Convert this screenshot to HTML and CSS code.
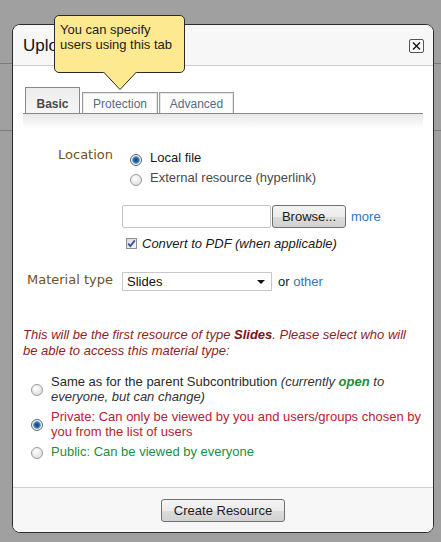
FILE: index.html
```html
<!DOCTYPE html>
<html>
<head>
<meta charset="utf-8">
<link rel="stylesheet" href="styles.css">
</head>
<body>
<div class="bgline bgline-a"></div>
<div class="bgline bgline-b"></div>
<div class="dialog">
  <div class="hdr">
    <span class="title">Upload Material</span>
    <button class="close" aria-label="Close"><svg width="13" height="12" viewBox="0 0 13 12"><path d="M3 2.5 L10 9.5 M10 2.5 L3 9.5" stroke="#111" stroke-width="1.4" fill="none"/></svg></button>
  </div>
  <div class="body">
    <div class="tabs">
      <div class="tab tab-active">Basic</div>
      <div class="tab tab-prot">Protection</div>
      <div class="tab tab-adv">Advanced</div>
    </div>
    <div class="shade"></div>
    <div class="form">
      <div class="lbl lbl-loc">Location</div>
      <div class="val">
        <label class="opt"><input type="radio" name="loc" checked><span class="dark">Local file</span></label>
        <label class="opt"><input type="radio" name="loc"><span class="grey">External resource (hyperlink)</span></label>
        <div class="filerow">
          <span class="filebox"></span>
          <button class="btn browse">Browse...</button>
          <a class="link more">more</a>
        </div>
        <label class="chk"><span class="cbox"><svg width="9" height="9" viewBox="0 0 9 9"><path d="M1.2 4.6 L3.4 7 L7.8 1.4" stroke="#3550a8" stroke-width="1.8" fill="none"/></svg></span><span class="conv">Convert to PDF (when applicable)</span></label>
      </div>
      <div class="lbl lbl-mt">Material type</div>
      <div class="val mtval">
        <span class="select">Slides<span class="caret"></span></span>
        <span class="or">or <a class="link">other</a></span>
      </div>
    </div>
    <p class="note">This will be the first resource of type <b>Slides</b>. Please select who will be able to access this material type:</p>
    <div class="opts">
      <label class="ropt"><input type="radio" name="acc"><span class="otext">Same as for the parent Subcontribution <i>(currently <b class="open">open</b> to everyone, but can change)</i></span></label>
      <label class="ropt"><input type="radio" name="acc" checked><span class="otext priv">Private: Can only be viewed by you and users/groups chosen by you from the list of users</span></label>
      <label class="ropt"><input type="radio" name="acc"><span class="otext pub">Public: Can be viewed by everyone</span></label>
    </div>
  </div>
  <div class="ftr">
    <button class="btn create">Create Resource</button>
  </div>
</div>
<div class="tip">
  You can specify<br>users using this tab
  <svg class="tip-arrow" width="35" height="19" viewBox="0 0 35 19"><polygon points="0,0 17,17.5 34,0" fill="#fde98f"/><polyline points="0.5,0 17,17.5 33.5,0" fill="none" stroke="#2a2a2a" stroke-width="1"/></svg>
</div>
</body>
</html>
```
FILE: styles.css
```css
html, body {
  margin: 0;
  padding: 0;
}
body {
  background: #a0a0a0;
  width: 441px;
  height: 542px;
  padding: 24px 0 0 12px;
  box-sizing: border-box;
  font-family: "Liberation Sans", Arial, sans-serif;
  font-size: 13px;
  color: #222;
  position: relative;
  overflow: hidden;
}
.bgline {
  position: absolute;
  left: 0;
  right: 0;
  height: 1px;
  background: #7c7c7c;
}
.bgline-a { top: 63px; }
.bgline-b { top: 130px; }

.dialog {
  position: relative;
  width: 422px;
  height: 509px;
  box-sizing: border-box;
  border: 1px solid #2b2b2b;
  border-radius: 8px;
  background: #fff;
  overflow: hidden;
}
.hdr {
  height: 40px;
  background: #f7f7f7;
  border-bottom: 1px solid #cfcfcf;
  display: flex;
  align-items: center;
  justify-content: space-between;
  padding: 0 9px 0 10px;
}
.title {
  font-size: 17px;
  color: #111;
  margin-top: 1px;
}
.close {
  width: 15px;
  height: 14px;
  padding: 0;
  margin: 2px 0 0 0;
  border: 1px solid #555;
  border-radius: 2px;
  background: #fbfbfb;
  display: flex;
  align-items: center;
  justify-content: center;
}
.body {
  height: 421px;
  box-sizing: border-box;
  padding: 21px 10px 0;
}
.tabs {
  display: flex;
  align-items: flex-end;
  gap: 2px;
  height: 26px;
  padding-left: 2px;
  border-bottom: 1px solid #8a8a8a;
}
.tab {
  box-sizing: border-box;
  border: 1px solid #9a9a9a;
  border-bottom: none;
  font-size: 12px;
  line-height: 14px;
  text-align: center;
  padding-bottom: 2px;
  display: flex;
  align-items: flex-end;
  justify-content: center;
}
.tab-active {
  width: 55px;
  height: 26px;
  border-color: #888;
  background: linear-gradient(#ececec, #f6f6f6);
  font-weight: bold;
  color: #4a4a4a;
}
.tab-prot, .tab-adv {
  height: 21px;
  background: #fdfdfd;
  color: #5a6886;
  box-shadow: inset 1px 1px 0 #e6e6e6, inset -1px 0 0 #e6e6e6;
}
.tab-prot { width: 76px; }
.tab-adv { width: 75px; margin-left: -1px; }
.shade {
  height: 15px;
  background: linear-gradient(#e8e8e8, #fff);
}
.form {
  margin-top: 19px;
  display: grid;
  grid-template-columns: 90px 1fr;
  column-gap: 9px;
  row-gap: 19px;
}
.lbl {
  font-family: "DejaVu Sans", Verdana, sans-serif;
  font-size: 13px;
  color: #6b5424;
  text-align: right;
}
.lbl-loc {
  line-height: 20px;
  margin-top: -3px;
}
.lbl-mt {
  line-height: 19px;
  margin-top: -2px;
}
.val {
  display: flex;
  flex-direction: column;
  align-items: flex-start;
}
.opt {
  height: 20px;
  display: flex;
  align-items: center;
  gap: 8px;
  padding-left: 8px;
  line-height: 20px;
}
.dark { color: #1a1a1a; }
.grey { color: #4a4a4a; }
input[type=radio] {
  appearance: none;
  -webkit-appearance: none;
  width: 12px;
  height: 12px;
  margin: 3px 0 0 0;
  border-radius: 50%;
  border: 1px solid #9a9a9a;
  background: radial-gradient(circle at 40% 35%, #ffffff 0%, #e2e2e2 70%, #cfcfcf 100%);
  box-sizing: border-box;
  flex: none;
}
input[type=radio]:checked {
  border-color: #6b6b6b;
  background: radial-gradient(circle at 50% 50%, #0e3d6e 0, #2a6fb0 2.5px, #7fb0dd 3.6px, #eef2f6 4.2px, #d8d8d8 100%);
}
.filerow {
  margin-top: 17px;
  display: flex;
  align-items: center;
  height: 23px;
}
.filebox {
  width: 149px;
  height: 23px;
  box-sizing: border-box;
  border: 1px solid #c4c4c4;
  border-radius: 2px;
  background: #fff;
}
.btn {
  font-family: "Liberation Sans", Arial, sans-serif;
  font-size: 13px;
  color: #1a1a1a;
  border: 1px solid #707070;
  border-radius: 3px;
  background: linear-gradient(#f4f4f4 0%, #ebebeb 50%, #dcdcdc 51%, #d2d2d2 100%);
  padding: 0;
  box-sizing: border-box;
}
.browse {
  width: 74px;
  height: 23px;
  margin-left: 1px;
}
.link {
  color: #2a78c0;
  text-decoration: none;
}
.more {
  margin-left: 5px;
}
.chk {
  margin-top: 5px;
  height: 20px;
  display: flex;
  align-items: center;
  gap: 5px;
  padding-left: 4px;
}
.cbox {
  width: 11px;
  height: 11px;
  box-sizing: border-box;
  border: 1px solid #8d8d8d;
  background: linear-gradient(135deg, #dcdcdc, #f6f6f6);
  display: flex;
  align-items: center;
  justify-content: center;
  margin-top: 1px;
}
.conv {
  font-style: italic;
  color: #1a1a1a;
}
.mtval {
  flex-direction: row;
  align-items: center;
  height: 19px;
}
.select {
  position: relative;
  width: 150px;
  height: 19px;
  box-sizing: border-box;
  border: 1px solid #c8c8c8;
  background: #fff;
  padding: 1px 0 0 4px;
  line-height: 15px;
  color: #111;
}
.caret {
  position: absolute;
  right: 6px;
  top: 7px;
  width: 0;
  height: 0;
  border-left: 4px solid transparent;
  border-right: 4px solid transparent;
  border-top: 4px solid #111;
}
.or {
  margin-left: 6px;
  color: #1a1a1a;
}
.note {
  margin: 36px 0 0;
  font-style: italic;
  line-height: 16px;
  color: #8e1d24;
}
.note b {
  font-weight: bold;
  color: #7a1218;
}
.opts {
  margin-top: 15px;
  display: flex;
  flex-direction: column;
  gap: 5px;
}
.ropt {
  display: flex;
  align-items: center;
  gap: 8px;
  padding-left: 8px;
}
.ropt input[type=radio] {
  margin: 2px 0 0 0;
}
.otext {
  line-height: 15px;
  color: #2a2a2a;
}
.otext i {
  color: #333;
}
.open {
  color: #1e8c3a;
  font-weight: bold;
}
.priv { color: #b82331; }
.pub { color: #1e8e3e; }
.ftr {
  border-top: 1px solid #cfcfcf;
  background: #f7f7f7;
  display: flex;
  justify-content: center;
  padding-top: 11px;
  box-sizing: border-box;
  height: 45px;
}
.create {
  width: 124px;
  height: 23px;
}
.tip {
  position: absolute;
  left: 54px;
  top: 15px;
  width: 131px;
  height: 58px;
  box-sizing: border-box;
  border: 1px solid #2a2a2a;
  border-radius: 5px;
  background: #fde98f;
  padding: 6px 0 0 5px;
  line-height: 15px;
  font-size: 13px;
  color: #1c1c1c;
  z-index: 2;
}
.tip-arrow {
  position: absolute;
  left: 48px;
  top: 56px;
}
```
